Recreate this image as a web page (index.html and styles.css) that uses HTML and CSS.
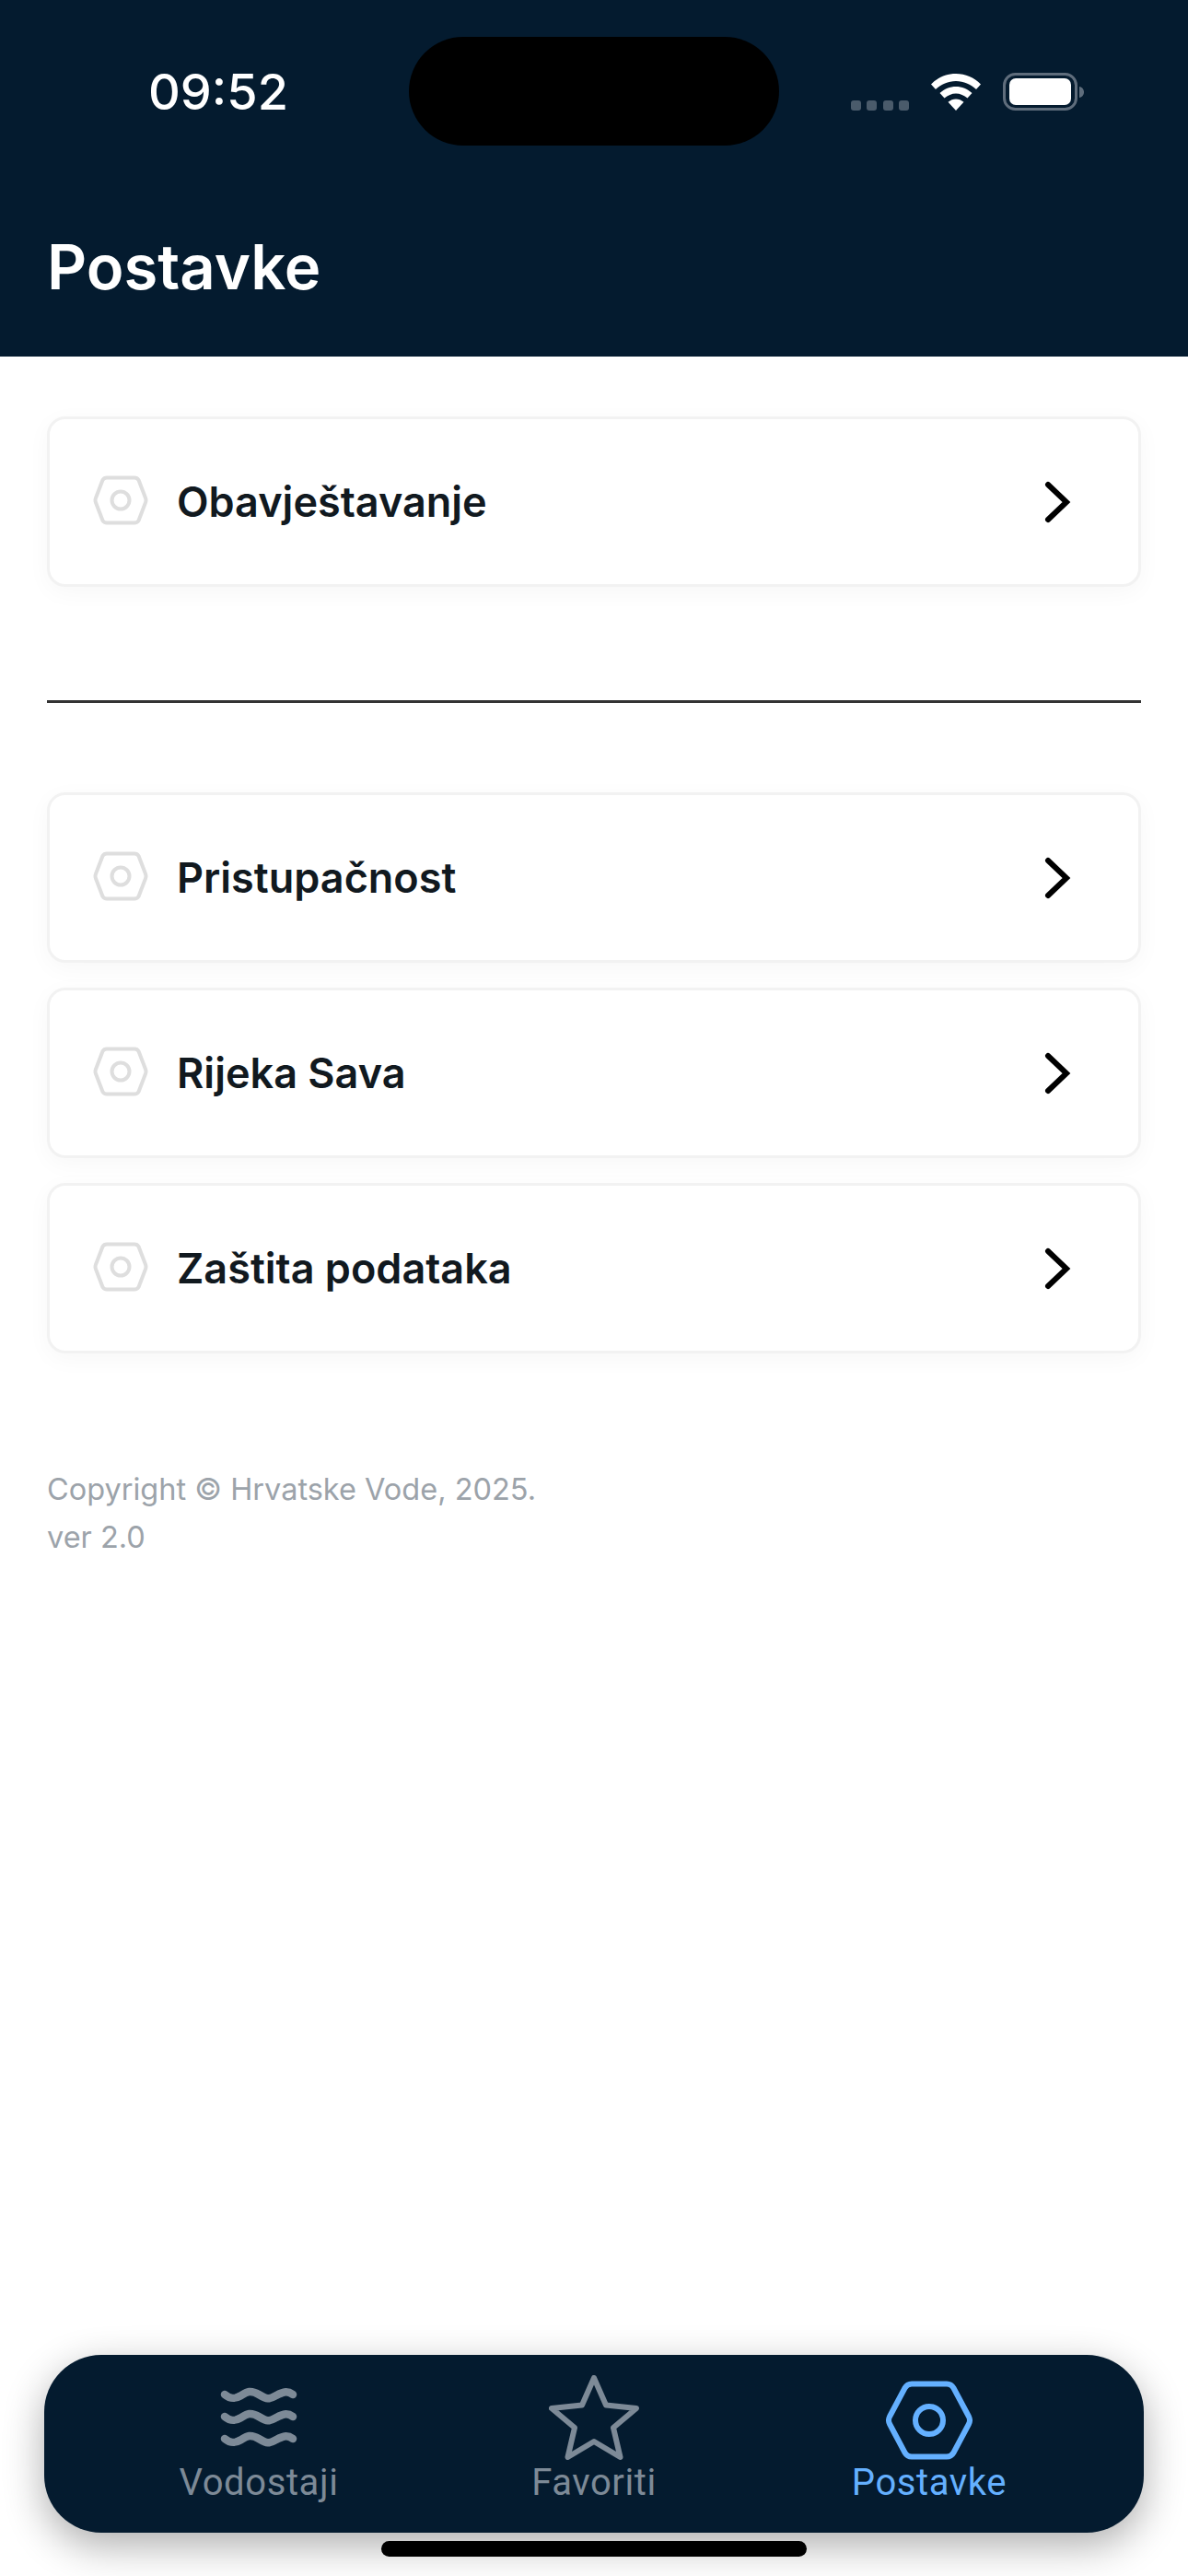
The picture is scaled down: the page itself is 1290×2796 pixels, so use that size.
FILE: index.html
```html
<!DOCTYPE html>
<html lang="hr">
<head>
<meta charset="utf-8">
<title>Postavke</title>
<link rel="stylesheet" href="styles.css">
</head>
<body>
<div class="app">
  <header class="header">
    <div class="status">
      <span class="time">09:52</span>
      <div class="status-icons">
        <div class="dots"><i></i><i></i><i></i><i></i></div>
        <svg class="wifi" width="54" height="40" viewBox="0 0 54 40"><path fill="#fff" d="M27 0C16.500 0 7.500 4 0 11.500L5 17C11 11.500 18.500 8 27 8S43 11.500 49 17L54 11.500C46.500 4 37.500 0 27 0Z"/><path fill="#fff" d="M27 14C20.500 14 14.500 16.500 9.500 21L14.500 26.500C18 23.500 22.500 21.500 27 21.500S36 23.500 39.500 26.500L44.500 21C39.500 16.500 33.500 14 27 14Z"/><path fill="#fff" d="M27 27.500C24 27.500 21 28.700 18.500 30.800L27 40L35.500 30.800C33 28.700 30 27.500 27 27.500Z"/></svg>
        <svg class="battery" width="89" height="42" viewBox="0 0 89 42"><rect x="1.500" y="1.500" width="78" height="38" rx="12" fill="none" stroke="#5f6d7c" stroke-width="3"/><rect x="7" y="6" width="67" height="29" rx="7" fill="#fff"/><path fill="#5f6d7c" d="M83 15C86 15.500 88 18 88 21S86 26.500 83 27Z"/></svg>
      </div>
    </div>
    <div class="island"></div>
    <h1 class="title">Postavke</h1>
  </header>

  <main class="content">
    <a class="card">
      <svg class="hex" width="60" height="54" viewBox="0 0 60 54"><path d="M15 2.500H45Q48 2.500 49.500 5L57 24.500Q58 27 57 29.500L49.500 49Q48 51.500 45 51.500H15Q12 51.500 10.500 49L3 29.500Q2 27 3 24.500L10.500 5Q12 2.500 15 2.500Z" fill="none" stroke="#dedede" stroke-width="4"/><circle cx="30" cy="27" r="9.500" fill="none" stroke="#dedede" stroke-width="4"/></svg>
      <span class="card-label">Obavještavanje</span>
      <svg class="chev" width="32" height="46" viewBox="0 0 32 46"><path d="M6 4L26 23L6 42" fill="none" stroke="#000" stroke-width="6" stroke-linecap="round"/></svg>
    </a>
    <hr class="divider">
    <div class="group">
      <a class="card">
        <svg class="hex" width="60" height="54" viewBox="0 0 60 54"><path d="M15 2.500H45Q48 2.500 49.500 5L57 24.500Q58 27 57 29.500L49.500 49Q48 51.500 45 51.500H15Q12 51.500 10.500 49L3 29.500Q2 27 3 24.500L10.500 5Q12 2.500 15 2.500Z" fill="none" stroke="#dedede" stroke-width="4"/><circle cx="30" cy="27" r="9.500" fill="none" stroke="#dedede" stroke-width="4"/></svg>
        <span class="card-label">Pristupačnost</span>
        <svg class="chev" width="32" height="46" viewBox="0 0 32 46"><path d="M6 4L26 23L6 42" fill="none" stroke="#000" stroke-width="6" stroke-linecap="round"/></svg>
      </a>
      <a class="card">
        <svg class="hex" width="60" height="54" viewBox="0 0 60 54"><path d="M15 2.500H45Q48 2.500 49.500 5L57 24.500Q58 27 57 29.500L49.500 49Q48 51.500 45 51.500H15Q12 51.500 10.500 49L3 29.500Q2 27 3 24.500L10.500 5Q12 2.500 15 2.500Z" fill="none" stroke="#dedede" stroke-width="4"/><circle cx="30" cy="27" r="9.500" fill="none" stroke="#dedede" stroke-width="4"/></svg>
        <span class="card-label">Rijeka Sava</span>
        <svg class="chev" width="32" height="46" viewBox="0 0 32 46"><path d="M6 4L26 23L6 42" fill="none" stroke="#000" stroke-width="6" stroke-linecap="round"/></svg>
      </a>
      <a class="card">
        <svg class="hex" width="60" height="54" viewBox="0 0 60 54"><path d="M15 2.500H45Q48 2.500 49.500 5L57 24.500Q58 27 57 29.500L49.500 49Q48 51.500 45 51.500H15Q12 51.500 10.500 49L3 29.500Q2 27 3 24.500L10.500 5Q12 2.500 15 2.500Z" fill="none" stroke="#dedede" stroke-width="4"/><circle cx="30" cy="27" r="9.500" fill="none" stroke="#dedede" stroke-width="4"/></svg>
        <span class="card-label">Zaštita podataka</span>
        <svg class="chev" width="32" height="46" viewBox="0 0 32 46"><path d="M6 4L26 23L6 42" fill="none" stroke="#000" stroke-width="6" stroke-linecap="round"/></svg>
      </a>
    </div>
    <p class="copy">Copyright © Hrvatske Vode, 2025.<br>ver 2.0</p>
  </main>

  <nav class="tabbar">
    <a class="tab">
      <svg class="tab-icon" width="84" height="84" viewBox="0 0 84 84"><g fill="none" stroke="#7d8a97" stroke-width="8.500" stroke-linecap="round"><path d="M5 13C11 18 16 18 22 14.500S32 7 42 13S53 18 60 14.500S72 8 79 13"/><path d="M5 37C11 42 16 42 22 38.500S32 31 42 37S53 42 60 38.500S72 32 79 37"/><path d="M5 61C11 66 16 66 22 62.500S32 55 42 61S53 66 60 62.500S72 56 79 61"/></g></svg>
      <span class="tab-label">Vodostaji</span>
    </a>
    <a class="tab">
      <svg class="tab-icon" width="98" height="92" viewBox="0 0 98 92"><path d="M49 3L62 32.500L95 36L70 57L77.500 89L49 72L20.500 89L28 57L3 36L36 32.500Z" fill="none" stroke="#7d8a97" stroke-width="6" stroke-linejoin="round"/></svg>
      <span class="tab-label">Favoriti</span>
    </a>
    <a class="tab tab-active">
      <svg class="tab-icon" width="94" height="86" viewBox="0 0 94 86"><path d="M28 3.500H66Q71 3.500 73.500 8L90 39Q92 43 90 47L73.500 78Q71 82.500 66 82.500H28Q23 82.500 20.500 78L4 47Q2 43 4 39L20.500 8Q23 3.500 28 3.500Z" fill="none" stroke="#64b0ff" stroke-width="6"/><circle cx="47" cy="43" r="15" fill="none" stroke="#64b0ff" stroke-width="6"/></svg>
      <span class="tab-label">Postavke</span>
    </a>
  </nav>
  <div class="home"></div>
</div>
</body>
</html>
```
FILE: styles.css
```css
* { box-sizing: border-box; }
html, body { margin: 0; padding: 0; background: #fff; }
.app {
  position: relative;
  width: 1290px;
  height: 2796px;
  overflow: hidden;
  display: flex;
  flex-direction: column;
  font-family: Inter, "Liberation Sans", sans-serif;
}
.header {
  height: 387px;
  background: #041b2f;
  padding: 0 51px;
  flex: none;
}
.status {
  height: 200px;
  display: flex;
  align-items: flex-start;
  justify-content: space-between;
}
.time {
  margin: 70px 0 0 110px;
  font-size: 54px;
  line-height: 60px;
  font-weight: 500;
  color: #fff;
}
.status-icons {
  display: flex;
  align-items: flex-start;
  margin: 79px 61px 0 0;
}
.dots { display: flex; gap: 6.500px; margin: 30px 24px 0 0; }
.dots i { width: 11px; height: 11px; border-radius: 3px; background: #4a5b6b; display: block; }
.wifi { margin-top: 1px; }
.battery { margin-left: 24px; }
.island {
  position: absolute;
  left: 444px;
  top: 40px;
  width: 402px;
  height: 118px;
  border-radius: 59px;
  background: #000;
}
.title {
  margin: 54px 0 0;
  font-size: 67px;
  line-height: 72px;
  font-weight: 600;
  color: #fff;
}
.content {
  padding: 65px 51px 0;
  flex: 1;
  display: flex;
  flex-direction: column;
}
.card {
  height: 185px;
  border: 3px solid #f2f2f2;
  border-radius: 20px;
  background: #fff;
  box-shadow: 0 6px 26px rgba(0,0,0,.035);
  display: flex;
  align-items: center;
  padding: 0 72px 0 47px;
}
.hex { margin: -4px 31px 0 0; flex: none; }
.card-label {
  flex: 1;
  font-size: 45px;
  line-height: 60px;
  font-weight: 600;
  color: #11191f;
}
.chev { flex: none; }
.divider {
  margin: 123px 0 97px;
  border: 0;
  height: 3px;
  background: #333;
}
.group { display: flex; flex-direction: column; gap: 27px; }
.copy {
  margin: 122px 0 0;
  font-size: 32.500px;
  line-height: 52px;
  color: #9ca3aa;
}
.tabbar {
  position: absolute;
  left: 48px;
  top: 2556px;
  width: 1194px;
  height: 193px;
  border-radius: 62px;
  background: #041b2f;
  box-shadow: 0 14px 44px rgba(0,0,0,.32);
  padding: 0 51px;
  display: grid;
  grid-template-columns: repeat(3, 1fr);
}
.tab {
  height: 100%;
  display: flex;
  flex-direction: column;
  align-items: center;
  justify-content: flex-end;
  padding-bottom: 32px;
  color: #7d8a97;
}
.tab-icon { margin-bottom: 3px; }
.tab-label {
  font-family: Roboto, Inter, sans-serif;
  font-size: 40px;
  line-height: 44px;
  letter-spacing: 0.6px;
}
.tab-active { color: #64b0ff; }
.home {
  position: absolute;
  left: 414px;
  top: 2758px;
  width: 462px;
  height: 17px;
  border-radius: 9px;
  background: #000;
}
```
